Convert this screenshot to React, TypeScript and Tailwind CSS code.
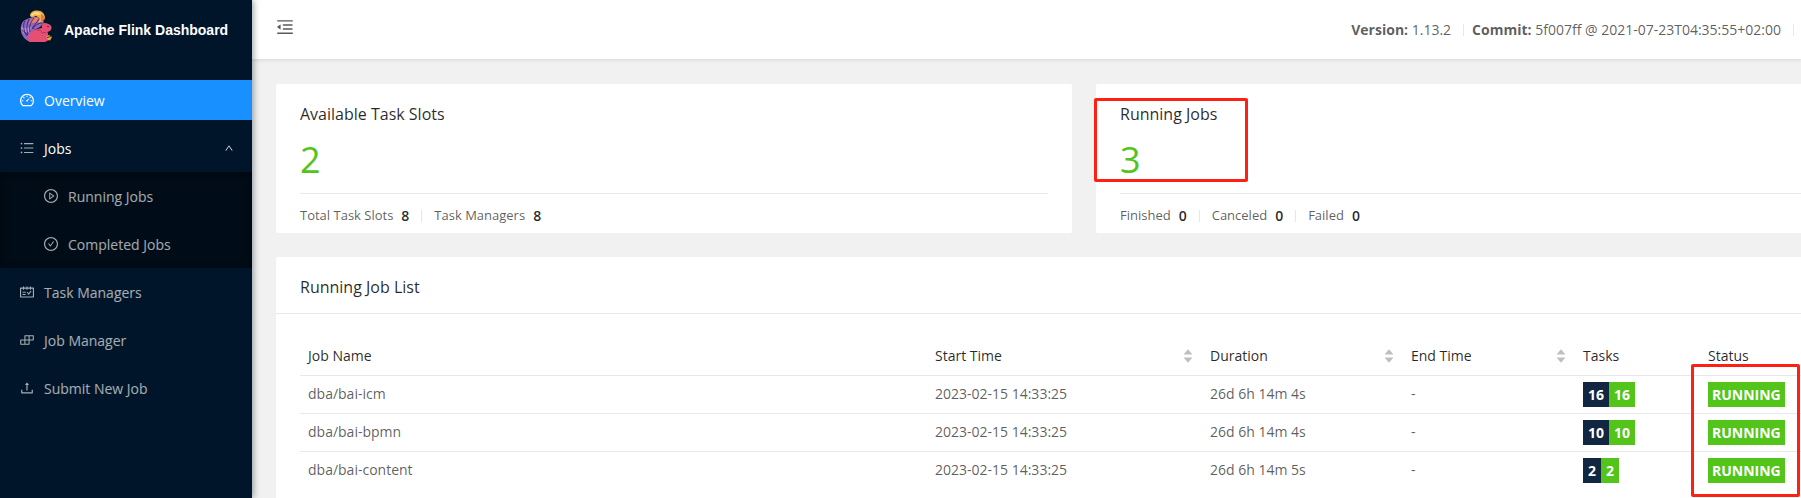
import type { ReactNode } from "react";
import {
  AiFillCaretDown,
  AiFillCaretUp,
  AiOutlineBars,
  AiOutlineBuild,
  AiOutlineCheckCircle,
  AiOutlineDashboard,
  AiOutlineMenuFold,
  AiOutlinePlayCircle,
  AiOutlineSchedule,
  AiOutlineUp,
  AiOutlineUpload,
} from "react-icons/ai";

const jobs = [
  { name: "dba/bai-icm", start: "2023-02-15 14:33:25", duration: "26d 6h 14m 4s", tasks: 16 },
  { name: "dba/bai-bpmn", start: "2023-02-15 14:33:25", duration: "26d 6h 14m 4s", tasks: 10 },
  { name: "dba/bai-content", start: "2023-02-15 14:33:25", duration: "26d 6h 14m 5s", tasks: 2 },
];

function FlinkLogo() {
  return (
    <svg viewBox="0 0 32 32" className="size-8 shrink-0" aria-hidden="true">
      <path d="M8 31C3 28 0 23 1 16.5C1.500 13 3 11 5 10L8 8.500L14 7L21 7L24 12L20 17L14 20L11 25L10 31Z" fill="#8f68c0" />
      <path d="M1 17L6 18L12 17L9 22L3 23Z" fill="#c08ae0" />
      <path d="M10 6C10 3 12 0.500 17 0.500C22 0.500 25 4 25 8L22 12L18 13L20 8L16 6L12 7.500Z" fill="#f6b04a" />
      <path d="M11 5C13 2 18 1 21 4L18 5L15 4L12 6Z" fill="#ffe08e" />
      <path d="M21 4L24 6L25 9L21 12Z" fill="#e57a35" />
      <path d="M12 9L16 7L19 9L17 12L12 13L9 14Z" fill="#f07a6a" />
      <path d="M5 11C3 14 3 20 7 26M9 9C7 14 6 19 8 24M14 8C10 13 9 17 10 22M19 9C16 14 13 16 12 19M22 13C18 13 14 16 13 19M2 20L8 25" fill="none" stroke="#2a1b50" strokeWidth="0.800" />
      <path d="M9 32C7 28 9 23 14 20C17 18.500 20 18.500 22 18C21 15 22.500 12.500 25.500 13L27 13.500C30 14 32 16 31.500 18.500C31 21 29 21.500 27.500 22C28.500 24 28 27 27 28L28 30.500L25 32Z" fill="#e64f74" />
      <path d="M17 20.500C20 19.500 22 21 22.500 24M23 22.500L26 22.500" fill="none" stroke="#a92c56" strokeWidth="0.700" />
      <circle cx="28" cy="16.500" r="0.700" fill="#35122c" />
      <path d="M26.500 26.500L29 25L32 27L30 30.500L27.500 30Z" fill="#eba33d" />
      <path d="M27 27.500L31 26.500" stroke="#563018" strokeWidth="1" />
    </svg>
  );
}

function NavLink({ icon, label, active, nested }: { icon: ReactNode; label: string; active?: boolean; nested?: boolean }) {
  return (
    <a
      href="#"
      className={`flex h-10 items-center gap-[9px] ${nested ? "pl-[43px]" : "pl-[19px]"} ${
        active ? "bg-[#1890ff] text-white" : "text-white/65"
      }`}
    >
      {icon}
      <span className="pt-0.5">{label}</span>
    </a>
  );
}

function Stat({ label, value }: { label: string; value: number }) {
  return (
    <div className="flex items-center gap-2">
      <dt className="text-[13px] leading-[21px]">{label}</dt>
      <dd className="leading-[21px] font-semibold text-black/85">{value}</dd>
    </div>
  );
}

function Divider() {
  return <span className="h-3 w-px bg-[#e8e8e8]" />;
}

function SummaryCard({ title, value, highlight, children }: { title: string; value: number; highlight?: boolean; children: ReactNode }) {
  return (
    <section className="relative min-w-0 flex-1 rounded-xs bg-white px-6 pt-4">
      <h2 className="text-base leading-7 text-black/85">{title}</h2>
      <div className="mt-1 pb-1.5 text-[36px] leading-[55px] text-[#52c41a]">{value}</div>
      <dl className="flex items-center gap-3 border-t border-[#e8e8e8] pt-[11px] pb-[7px]">{children}</dl>
      {highlight && <div className="absolute top-3.5 -left-0.5 h-[84px] w-[154px] rounded-xs border-3 border-[#ff2014]" />}
    </section>
  );
}

function SortHeader({ label }: { label: string }) {
  return (
    <th className="px-2 font-normal">
      <button type="button" className="flex w-full items-center justify-between" aria-label={`Sort by ${label}`}>
        <span>{label}</span>
        <span className="flex flex-col text-[#bfbfbf]">
          <AiFillCaretUp size={12} className="-mb-1" />
          <AiFillCaretDown size={12} />
        </span>
      </button>
    </th>
  );
}

export default function App() {
  return (
    <div className="flex min-h-screen overflow-hidden bg-[#f1f1f1] font-['Open_Sans','Noto_Sans',sans-serif] text-sm text-black/65">
      <aside className="z-10 w-63 shrink-0 bg-[#001529] shadow-[2px_0_6px_rgba(0,21,41,0.35)]">
        <div className="flex h-20 items-start gap-3 pt-2.5 pl-5">
          <FlinkLogo />
          <h1 className="pt-1.5 font-['Liberation_Sans',Arial,sans-serif] text-sm leading-7 font-bold whitespace-nowrap text-white">
            Apache Flink Dashboard
          </h1>
        </div>
        <nav>
          <NavLink icon={<AiOutlineDashboard size={16} />} label="Overview" active />
          <button type="button" aria-expanded="true" className="mt-2 mb-1 flex h-10 w-full items-center gap-[9px] pr-[18px] pl-[19px] text-white">
            <AiOutlineBars size={16} className="text-white/65" />
            <span className="flex-1 pt-0.5 text-left">Jobs</span>
            <AiOutlineUp size={10} />
          </button>
          <div className="flex flex-col gap-2 bg-[#000c17] py-1 shadow-[inset_0_2px_8px_rgba(0,0,0,0.45)]">
            <NavLink icon={<AiOutlinePlayCircle size={16} />} label="Running Jobs" nested />
            <NavLink icon={<AiOutlineCheckCircle size={16} />} label="Completed Jobs" nested />
          </div>
          <div className="mt-1 flex flex-col gap-2">
            <NavLink icon={<AiOutlineSchedule size={16} />} label="Task Managers" />
            <NavLink icon={<AiOutlineBuild size={16} />} label="Job Manager" />
            <NavLink icon={<AiOutlineUpload size={16} />} label="Submit New Job" />
          </div>
        </nav>
      </aside>

      <div className="min-w-0 flex-1">
        <header className="flex h-[59px] items-center justify-between bg-white pr-[7px] pl-[23px] shadow-[0_1px_4px_rgba(0,21,41,0.12)]">
          <button type="button" aria-label="Collapse menu" className="pb-1.5">
            <AiOutlineMenuFold size={20} />
          </button>
          <div className="flex items-center gap-3 whitespace-nowrap">
            <span>
              <strong className="font-bold">Version:</strong> 1.13.2
            </span>
            <div className="flex items-center gap-2">
              <Divider />
              <span>
                <strong className="font-bold">Commit:</strong> 5f007ff @ 2021-07-23T04:35:55+02:00
              </span>
            </div>
            <Divider />
          </div>
        </header>

        <main className="flex w-[calc(100%+115px)] flex-col gap-6 px-6 pt-[25px]">
          <div className="flex gap-6">
            <SummaryCard title="Available Task Slots" value={2}>
              <Stat label="Total Task Slots" value={8} />
              <Divider />
              <Stat label="Task Managers" value={8} />
            </SummaryCard>
            <SummaryCard title="Running Jobs" value={3} highlight>
              <Stat label="Finished" value={0} />
              <Divider />
              <Stat label="Canceled" value={0} />
              <Divider />
              <Stat label="Failed" value={0} />
            </SummaryCard>
          </div>

          <section className="rounded-t-xs bg-white">
            <h2 className="border-b border-[#e8e8e8] px-6 pt-[18px] pb-3.5 text-base leading-6 text-black/85">Running Job List</h2>
            <div className="relative px-6 pt-6 pb-[9px]">
              <table className="w-full table-fixed border-collapse text-left">
                <colgroup>
                  <col />
                  <col className="w-[275px]" />
                  <col className="w-[201px]" />
                  <col className="w-[172px]" />
                  <col className="w-[125px]" />
                  <col className="w-[168px]" />
                </colgroup>
                <thead className="text-black/85">
                  <tr className="h-[37px] border-b border-[#e8e8e8]">
                    <th className="px-2 font-normal">Job Name</th>
                    <SortHeader label="Start Time" />
                    <SortHeader label="Duration" />
                    <SortHeader label="End Time" />
                    <th className="px-2 font-normal">Tasks</th>
                    <th className="px-2 font-normal">Status</th>
                  </tr>
                </thead>
                <tbody>
                  {jobs.map((job) => (
                    <tr key={job.name} className="h-[38px] border-b border-[#e8e8e8] last:border-b-0">
                      <td className="px-2">{job.name}</td>
                      <td className="px-2">{job.start}</td>
                      <td className="px-2">{job.duration}</td>
                      <td className="px-2">-</td>
                      <td className="px-2">
                        <div className="flex leading-[25px] font-bold text-white">
                          <span className="bg-[#112641] px-[5px]">{job.tasks}</span>
                          <span className="bg-[#52c41a] px-[5px]">{job.tasks}</span>
                        </div>
                      </td>
                      <td className="px-2">
                        <span className="inline-block bg-[#52c41a] px-1 align-middle leading-[25px] font-bold text-white">RUNNING</span>
                      </td>
                    </tr>
                  ))}
                </tbody>
              </table>
              <div className="absolute top-[50px] right-[92px] h-[133px] w-[109px] rounded-xs border-3 border-[#ff2014]" />
            </div>
          </section>
        </main>
      </div>
    </div>
  );
}
